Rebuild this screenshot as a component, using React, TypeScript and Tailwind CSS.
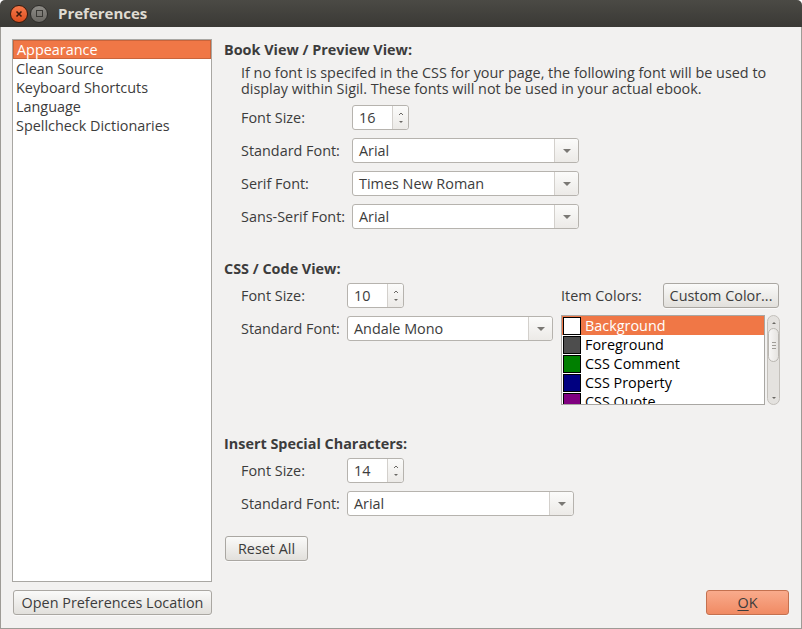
import type { ReactNode } from "react";

const FONT = { fontFamily: '"Open Sans", "Noto Sans", sans-serif' };

function SpinBox(props: { value: string; className?: string }) {
  return (
    <div
      className={`flex h-[25px] w-[57px] rounded-[3px] border border-[#b6b3ae] bg-white ${props.className ?? ""}`}
    >
      <div className="flex flex-1 items-center pl-[6px] text-[#3c3c3c]">{props.value}</div>
      <div className="flex w-[16px] flex-col items-center justify-center rounded-r-[3px] border-l border-[#d3d0cc] bg-gradient-to-b from-[#fbfbfa] to-[#eceae7]">
        <svg width="6" height="16" viewBox="0 0 6 16">
          <path d="M1 5 L3 3 L5 5" stroke="#6a6864" strokeWidth="1" fill="none" />
          <path d="M1 11 L3 13 L5 11 Z" fill="#6a6864" />
        </svg>
      </div>
    </div>
  );
}

function ComboBox(props: { value: string; width: string }) {
  return (
    <div
      className={`flex h-[25px] rounded-[3px] border border-[#b6b3ae] bg-white ${props.width}`}
    >
      <div className="flex flex-1 items-center pl-[6px] text-[#3c3c3c]">{props.value}</div>
      <div className="flex w-[24px] items-center justify-center rounded-r-[3px] border-l border-[#d3d0cc] bg-gradient-to-b from-[#fbfbfa] to-[#eceae7]">
        <svg width="10" height="6" viewBox="0 0 10 6">
          <path d="M1 1 L9 1 L5 5 Z" fill="#7a7874" />
        </svg>
      </div>
    </div>
  );
}

function Button(props: { children: ReactNode; className?: string; primary?: boolean }) {
  const look = props.primary
    ? "border-[#c4714f] bg-gradient-to-b from-[#f9ab8c] to-[#f08a63]"
    : "border-[#aaa7a2] bg-gradient-to-b from-[#fafaf9] to-[#e2e0dc]";
  return (
    <div
      className={`flex h-[25px] items-center justify-center rounded-[3px] border text-[#3c3c3c] shadow-[0_1px_0_rgba(255,255,255,0.6)] ${look} ${props.className ?? ""}`}
    >
      {props.children}
    </div>
  );
}

function FormRow(props: { label: string; labelWidth: string; children: ReactNode }) {
  return (
    <div className="flex items-center">
      <span className={`${props.labelWidth} text-[#3c3c3c]`}>{props.label}</span>
      {props.children}
    </div>
  );
}

const colorItems = [
  { name: "Background", swatch: "bg-white", selected: true },
  { name: "Foreground", swatch: "bg-[#4d4d4d]", selected: false },
  { name: "CSS Comment", swatch: "bg-[#007f00]", selected: false },
  { name: "CSS Property", swatch: "bg-[#000080]", selected: false },
  { name: "CSS Quote", swatch: "bg-[#800080]", selected: false },
];

function ColorList() {
  return (
    <div className="flex">
      <div className="h-[90px] w-[204px] overflow-hidden border border-[#a9a7a3] bg-white">
        {colorItems.map((item) => (
          <div
            key={item.name}
            className={`flex h-[19px] items-center ${item.selected ? "bg-[#f07746] text-white" : "text-black"}`}
          >
            <span className={`ml-[1px] h-[18px] w-[18px] border border-black ${item.swatch}`} />
            <span className="ml-[4px]">{item.name}</span>
          </div>
        ))}
      </div>
      {/* scrollbar */}
      <div className="ml-[2px] flex h-[90px] w-[13px] flex-col items-center rounded-full border border-[#c3c0bb] bg-[#e4e2df]">
        <svg width="6" height="10" viewBox="0 0 6 10" className="mt-[2px]">
          <path d="M1 6 L3 4 L5 6 Z" fill="#6a6864" />
        </svg>
        <div className="flex h-[34px] w-[11px] flex-col items-center justify-center gap-[2px] rounded-full border border-[#b9b6b1] bg-gradient-to-r from-[#f7f6f5] to-[#e6e4e1]">
          <span className="h-px w-[4px] bg-[#a09d98]" />
          <span className="h-px w-[4px] bg-[#a09d98]" />
          <span className="h-px w-[4px] bg-[#a09d98]" />
        </div>
        <div className="flex-1" />
        <svg width="6" height="10" viewBox="0 0 6 10" className="mb-[1px]">
          <path d="M1 4 L5 4 L3 6 Z" fill="#6a6864" />
        </svg>
      </div>
    </div>
  );
}

const pages = [
  "Appearance",
  "Clean Source",
  "Keyboard Shortcuts",
  "Language",
  "Spellcheck Dictionaries",
];

export default function App() {
  return (
    <div
      className="flex h-[629px] w-[802px] flex-col overflow-hidden text-[14.4px] leading-[19px]"
      style={FONT}
    >
      {/* title bar */}
      <div className="flex h-[27px] items-center rounded-t-[5px] bg-gradient-to-b from-[#4b4a45] to-[#3a3935]">
        <div className="ml-[10px] flex h-[18px] w-[18px] items-center justify-center rounded-full border border-[#3a1a0c] bg-gradient-to-b from-[#f6794a] to-[#dc4d1c]">
          <svg width="8" height="8" viewBox="0 0 8 8">
            <path d="M1.5 1.5 L6.5 6.5 M6.5 1.5 L1.5 6.5" stroke="#3b1a0d" strokeWidth="1.6" />
          </svg>
        </div>
        <div className="ml-[2px] flex h-[18px] w-[18px] items-center justify-center rounded-full border border-[#2e2d2a] bg-gradient-to-b from-[#8d8b86] to-[#6b6964]">
          <div className="h-[7px] w-[7px] border-[1.5px] border-[#3a3935]" />
        </div>
        <span className="ml-[10px] text-[15px] font-bold text-[#dfdbd2]">Preferences</span>
      </div>

      {/* body */}
      <div className="flex flex-1 flex-col border-x border-b border-[#9e9b96] bg-[#f2f1f0] px-[11px] pb-[13px] pt-[12px]">
        <div className="flex flex-1">
          {/* page list */}
          <div className="w-[200px] border border-[#a9a7a3] bg-white">
            {pages.map((p, i) => (
              <div
                key={p}
                className={`h-[19px] pl-[3px] ${i === 0 ? "border border-[#c9643b] bg-[#f07746] pl-[2px] leading-[17px] text-white" : "text-[#3c3c3c]"}`}
              >
                {p}
              </div>
            ))}
          </div>

          {/* settings */}
          <div className="ml-[12px] flex flex-1 flex-col">
            <div className="mt-[1px] font-bold text-[#3c3c3c]">Book View / Preview View:</div>
            <div className="ml-[17px] mt-[6px] leading-[16px] text-[#3c3c3c]">
              If no font is specifed in the CSS for your page, the following font will be used to
              <br />
              display within Sigil. These fonts will not be used in your actual ebook.
            </div>
            <div className="ml-[17px] mt-[8px] flex flex-col gap-[8px]">
              <FormRow label="Font Size:" labelWidth="w-[111px]">
                <SpinBox value="16" />
              </FormRow>
              <FormRow label="Standard Font:" labelWidth="w-[111px]">
                <ComboBox value="Arial" width="w-[227px]" />
              </FormRow>
              <FormRow label="Serif Font:" labelWidth="w-[111px]">
                <ComboBox value="Times New Roman" width="w-[227px]" />
              </FormRow>
              <FormRow label="Sans-Serif Font:" labelWidth="w-[111px]">
                <ComboBox value="Arial" width="w-[227px]" />
              </FormRow>
            </div>

            <div className="mt-[30px] font-bold text-[#3c3c3c]">CSS / Code View:</div>
            <div className="ml-[17px] mt-[5px] flex">
              <div className="flex flex-col gap-[8px]">
                <FormRow label="Font Size:" labelWidth="w-[106px]">
                  <SpinBox value="10" />
                </FormRow>
                <FormRow label="Standard Font:" labelWidth="w-[106px]">
                  <ComboBox value="Andale Mono" width="w-[206px]" />
                </FormRow>
              </div>
              <div className="ml-[8px] flex w-[219px] flex-col">
                <div className="flex h-[25px] items-center">
                  <span className="text-[#3c3c3c]">Item Colors:</span>
                  <Button className="ml-auto mr-[1px] w-[116px]">Custom Color...</Button>
                </div>
                <div className="mt-[7px]">
                  <ColorList />
                </div>
              </div>
            </div>

            <div className="mt-[29px] font-bold text-[#3c3c3c]">Insert Special Characters:</div>
            <div className="ml-[17px] mt-[5px] flex flex-col gap-[8px]">
              <FormRow label="Font Size:" labelWidth="w-[106px]">
                <SpinBox value="14" />
              </FormRow>
              <FormRow label="Standard Font:" labelWidth="w-[106px]">
                <ComboBox value="Arial" width="w-[227px]" />
              </FormRow>
            </div>

            <div className="mt-[20px]">
              <Button className="ml-[1px] w-[83px]">Reset All</Button>
            </div>
          </div>
        </div>

        {/* bottom buttons */}
        <div className="mt-[8px] flex items-center justify-between">
          <Button className="ml-[1px] w-[199px]">Open Preferences Location</Button>
          <Button primary className="mr-[1px] w-[83px]">
            <span>
              <span className="underline underline-offset-2">O</span>K
            </span>
          </Button>
        </div>
      </div>
    </div>
  );
}
